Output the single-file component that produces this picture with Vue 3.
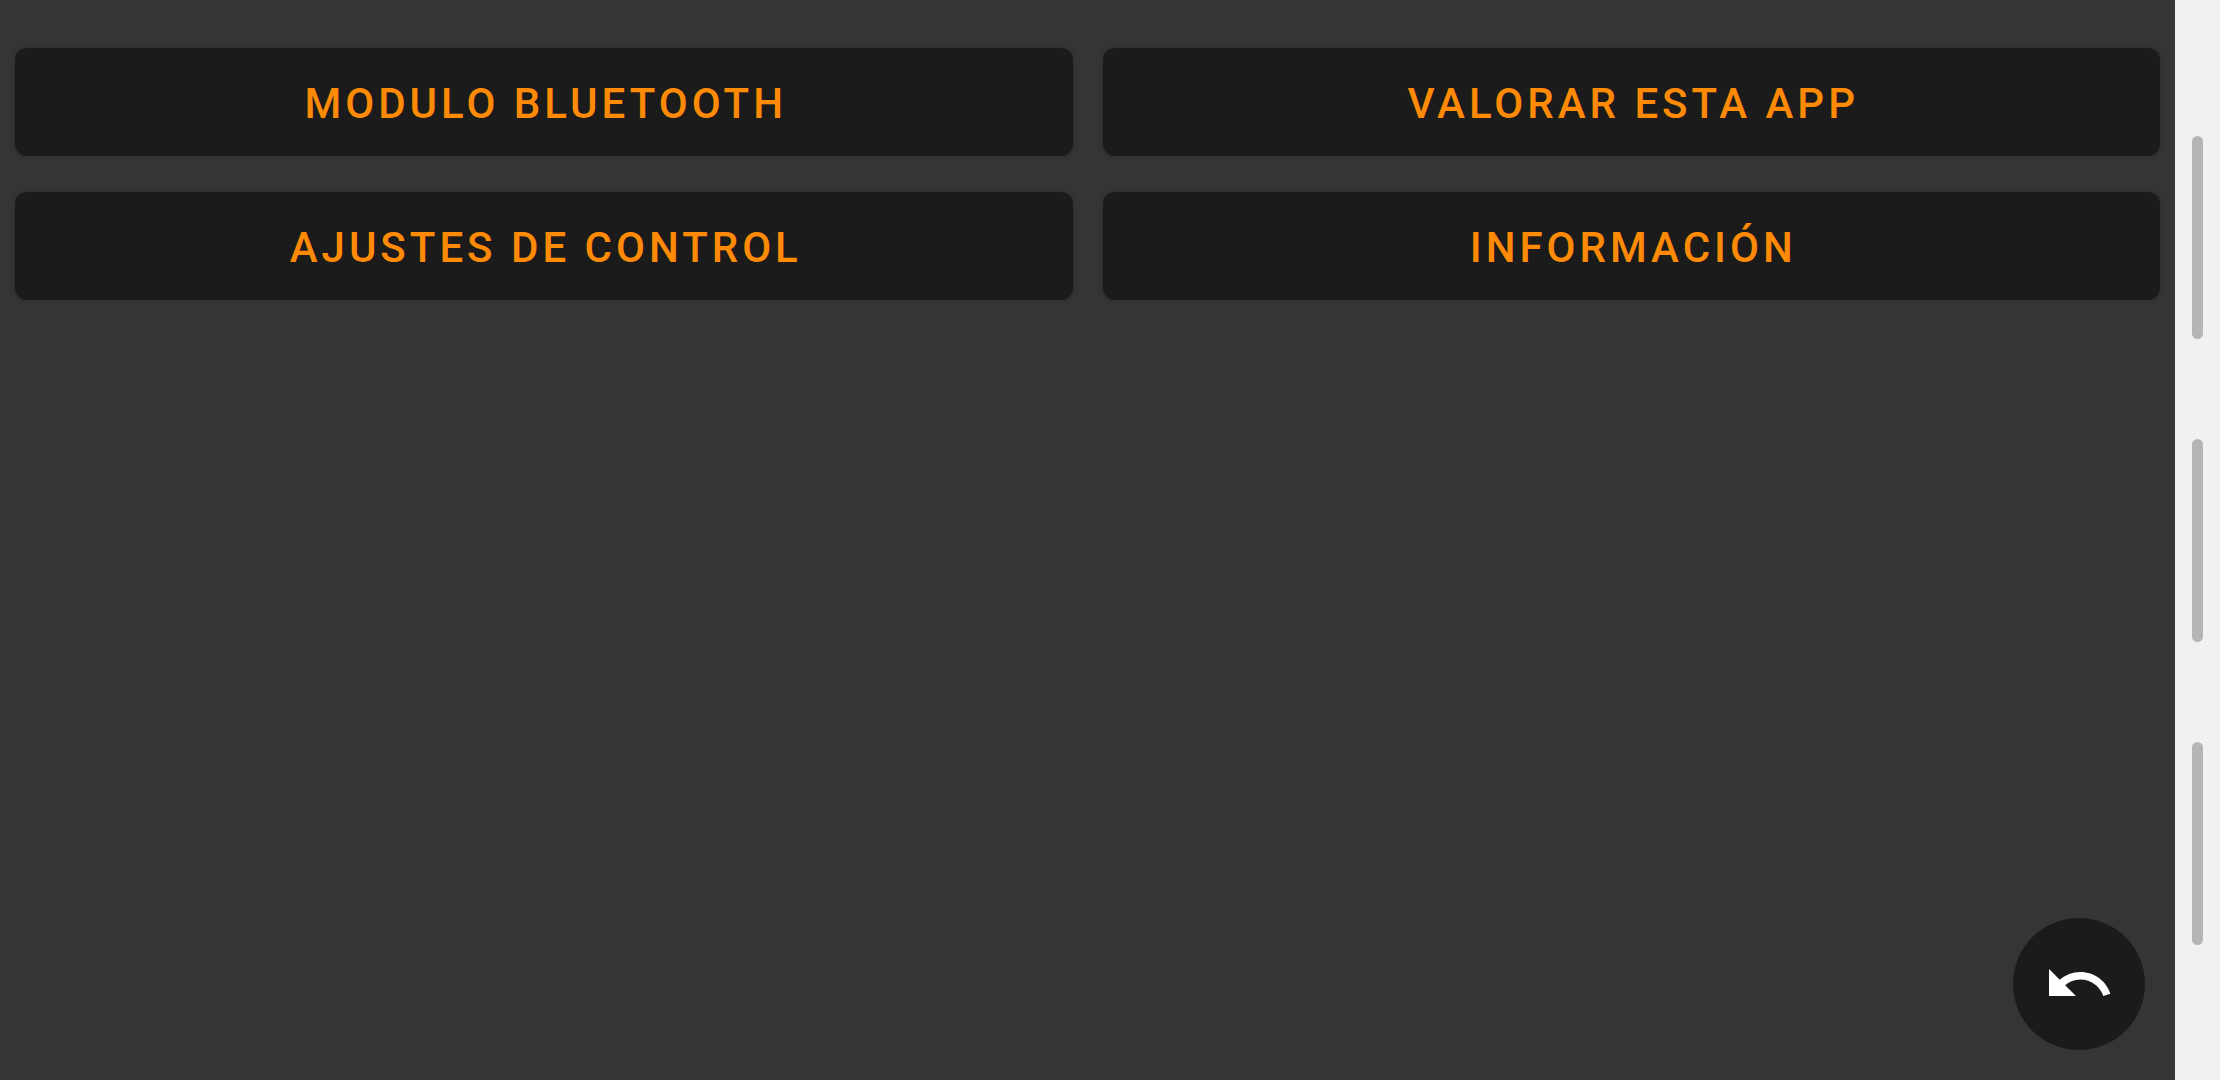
<script setup>
const actions = ['Modulo Bluetooth', 'Valorar esta app', 'Ajustes de control', 'Información']
</script>

<template>
  <div class="screen">
    <main class="content">
      <nav class="actions" aria-label="Menú">
        <button v-for="label in actions" :key="label" type="button" class="action">{{ label }}</button>
      </nav>
      <button type="button" class="fab" aria-label="Volver">
        <svg viewBox="0 0 24 24" width="72" height="72" aria-hidden="true">
          <path
            fill="#fff"
            d="M12.5 8c-2.65 0-5.05.99-6.9 2.6L2 7v9h9l-3.62-3.62c1.39-1.16 3.16-1.88 5.12-1.88 3.54 0 6.55 2.31 7.6 5.5l2.37-.78C21.08 11.03 17.15 8 12.5 8z"
          />
        </svg>
      </button>
    </main>
    <aside class="rail">
      <span v-for="n in 3" :key="n" class="bar"></span>
    </aside>
  </div>
</template>

<style>
body {
  background: #353535;
}
</style>

<style scoped>
.screen {
  display: flex;
  min-height: 100vh;
  font-family: Roboto, "Liberation Sans", sans-serif;
}

.content {
  flex: 1;
  display: flex;
  flex-direction: column;
  justify-content: space-between;
  gap: 36px;
  padding: 48px 15px 30px;
  background: #353535;
}

.actions {
  display: grid;
  grid-template-columns: 1fr 1fr;
  gap: 36px 30px;
}

/* The extra left padding balances the tracking after the last letter. */
.action {
  height: 108px;
  padding: 4px 44px 0 48px;
  border: 0;
  border-radius: 12px;
  background: #1b1b1b;
  box-shadow: 0 0 5px rgba(0, 0, 0, 0.2);
  color: #ff8a06;
  font: 500 42px/50px Roboto, "Liberation Sans", sans-serif;
  letter-spacing: 4px;
  text-transform: uppercase;
  cursor: pointer;
}

.fab {
  align-self: flex-end;
  display: flex;
  align-items: center;
  justify-content: center;
  width: 132px;
  height: 132px;
  margin-right: 15px;
  padding: 0;
  border: 0;
  border-radius: 50%;
  background: #1b1b1b;
  cursor: pointer;
}

.rail {
  display: flex;
  flex-direction: column;
  align-items: center;
  justify-content: center;
  gap: 100px;
  width: 45px;
  background: #f1f1f1;
}

.bar {
  width: 11px;
  height: 203px;
  border-radius: 6px;
  background: #b5b5b5;
}
</style>
